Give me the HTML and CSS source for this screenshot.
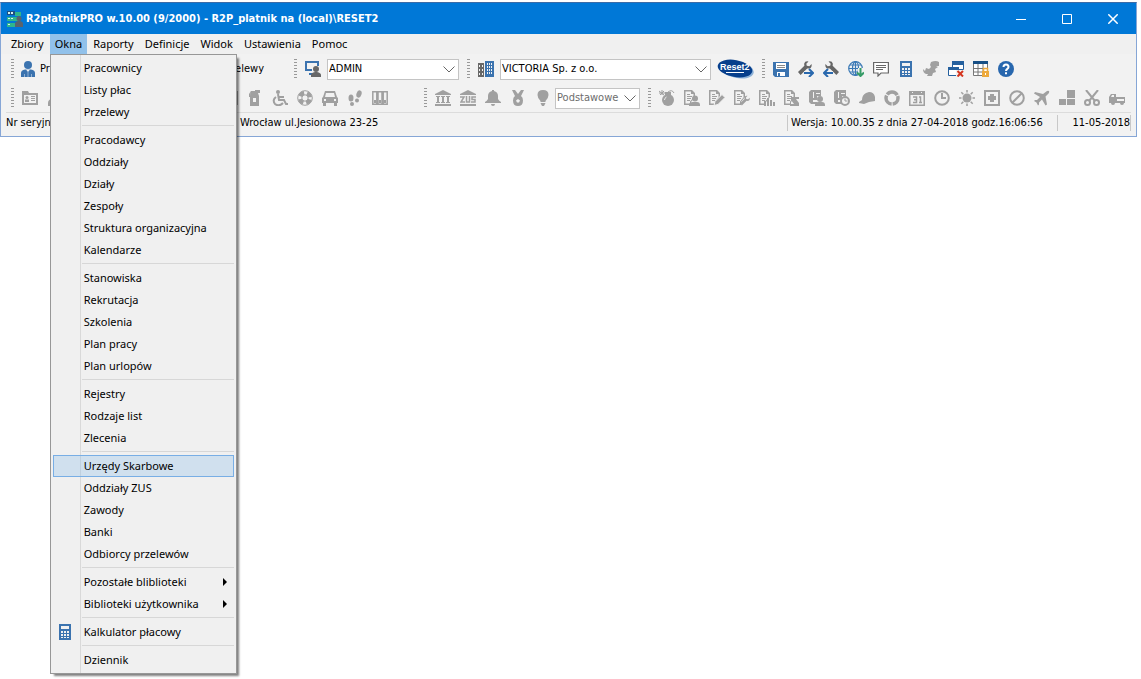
FILE: index.html
```
<!DOCTYPE html>
<html lang="pl">
<head>
<meta charset="utf-8">
<title>R2płatnikPRO</title>
<link rel="stylesheet" href="styles.css">
</head>
<body>
<svg class="defs" aria-hidden="true">
  <symbol id="doc" viewBox="0 0 16 16"><path fill-rule="evenodd" d="M0 0h8l3 3v4L7 12v3H0zM1.500 1.500v12H6v-2l3.500-4V4H7V1.500zM3 4h3v1H3zM3 6h5v1H3zM3 8h4v1H3zM3 10h3v1H3z"/></symbol>
  <symbol id="book" viewBox="0 0 16 16"><path fill-rule="evenodd" d="M2 0h10v6H8v4H4v2h4v2H2L0 12V2zM4 2v6h1V2zM7 3v1h4V3z"/></symbol>
  <symbol id="person" viewBox="0 0 16 16"><circle cx="8" cy="4" r="4"/><path d="M1 16v-3q0-4 5-4.500h4q5 .500 5 4.500v3z"/></symbol>
  <symbol id="wrench" viewBox="0 0 16 16"><path d="M15.500 3.500L13 6l-3-.500L9.500 3 12 .500Q8-.500 7 3l.300 2.500L0 12.500 3 16l7.500-7.500Q13 9 14.500 8q1.500-1.500 1-4.500z"/></symbol>
  <symbol id="calc" viewBox="0 0 16 16"><path fill-rule="evenodd" d="M2 0h12v16H2zM4 2v3h8V2zM4 7v2h2V7zM7 7v2h2V7zM10 7v2h2V7zM4 10v2h2v-2zM7 10v2h2v-2zM10 10v2h2v-2zM4 13v1h2v-1zM7 13v1h2v-1zM10 13v1h2v-1z"/></symbol>
</svg>
<main class="window">
  <header class="titlebar">
    <svg class="icon" viewBox="0 0 16 16"><path fill="#1c4f83" d="M0 0h8v4H0z"/><path fill="#2fb58c" d="M8 1h6v4H8zM0 6h12v4H0zM0 12h8v4H0z"/><path fill="#d5f2ed" d="M1 1h2v2H1zM4 1h2v2H4zM1 7h2v1H1zM4 7h2v1H4zM1 13h2v1H1z"/><circle cx="12" cy="7.500" r="2.500" fill="#59636d"/><path fill="#59636d" d="M8 16v-3q0-3 4-3t4 3v3z"/></svg>
    <h1 class="title">R2płatnikPRO w.10.00 (9/2000) - R2P_platnik na (local)\RESET2</h1>
    <button class="win-btn" aria-label="Minimalizuj"><svg class="glyph" viewBox="0 0 10 10"><path d="M0 5.500h10"/></svg></button>
    <button class="win-btn" aria-label="Maksymalizuj"><svg class="glyph" viewBox="0 0 10 10"><path d="M.5 .5h9v9h-9z"/></svg></button>
    <button class="win-btn" aria-label="Zamknij"><svg class="glyph" viewBox="0 0 10 10"><path stroke-width="1.500" d="M.3 .3l9.400 9.400M9.700 .3L.3 9.700"/></svg></button>
  </header>

  <nav class="menubar">
    <button class="menu-btn">Zbiory</button>
    <div class="menu-holder">
      <button class="menu-btn open">Okna</button>
      <div class="dropdown" role="menu">
        <button class="item">Pracownicy</button>
        <button class="item">Listy płac</button>
        <button class="item">Przelewy</button>
        <hr class="rule">
        <button class="item">Pracodawcy</button>
        <button class="item">Oddziały</button>
        <button class="item">Działy</button>
        <button class="item">Zespoły</button>
        <button class="item">Struktura organizacyjna</button>
        <button class="item">Kalendarze</button>
        <hr class="rule">
        <button class="item">Stanowiska</button>
        <button class="item">Rekrutacja</button>
        <button class="item">Szkolenia</button>
        <button class="item">Plan pracy</button>
        <button class="item">Plan urlopów</button>
        <hr class="rule">
        <button class="item">Rejestry</button>
        <button class="item">Rodzaje list</button>
        <button class="item">Zlecenia</button>
        <hr class="rule">
        <button class="item active">Urzędy Skarbowe</button>
        <button class="item">Oddziały ZUS</button>
        <button class="item">Zawody</button>
        <button class="item">Banki</button>
        <button class="item">Odbiorcy przelewów</button>
        <hr class="rule">
        <button class="item">Pozostałe bliblioteki<svg class="arrow" viewBox="0 0 4 8"><path d="M0 0l4 4-4 4z"/></svg></button>
        <button class="item">Biblioteki użytkownika<svg class="arrow" viewBox="0 0 4 8"><path d="M0 0l4 4-4 4z"/></svg></button>
        <hr class="rule">
        <button class="item with-icon"><svg class="icon blue"><use href="#calc"/></svg>Kalkulator płacowy</button>
        <hr class="rule">
        <button class="item">Dziennik</button>
      </div>
    </div>
    <button class="menu-btn">Raporty</button>
    <button class="menu-btn">Definicje</button>
    <button class="menu-btn">Widok</button>
    <button class="menu-btn">Ustawienia</button>
    <button class="menu-btn">Pomoc</button>
  </nav>

  <div class="toolbar upper">
    <div class="group">
      <i class="grip"></i>
      <button class="tool labelled"><svg class="icon" viewBox="0 0 16 16"><circle cx="8" cy="4" r="4" fill="#3b73af"/><path fill="#3b73af" d="M1 16v-4q0-3 4-3.500h6q4 .500 4 3.500v4z"/><path fill="#f2f2f2" d="M6 8.500h4L8 11z"/><path stroke="#8fb0d3" d="M4.500 13v3M11.500 13v3M8 10v6"/></svg>Pracownicy</button>
      <button class="tool labelled last">Przelewy</button>
    </div>
    <div class="group">
      <i class="grip"></i>
      <label class="tool" for="user"><svg class="icon" viewBox="0 0 16 16"><path fill="none" stroke="#3b73af" stroke-width="2" d="M13 5V1H1v8h6M4 13h4"/><g fill="#686868"><circle cx="11" cy="8" r="3"/><path d="M6 16v-2q0-2 4-3h2q4 1 4 3v2z"/></g></svg></label>
      <span class="combo"><select id="user" class="field"><option>ADMIN</option></select><svg class="chevron" viewBox="0 0 12 7"><path d="M.5 .5L6 6 11.500 .5"/></svg></span>
    </div>
    <div class="group">
      <i class="grip"></i>
      <label class="tool" for="firm"><svg class="icon" viewBox="0 0 16 16"><path fill="#686868" d="M0 2h6v14H0z"/><path fill="#3b73af" d="M7 0h9v16H7z"/><path fill="#f2f2f2" d="M1 4h1v2H1zM4 4h1v2H4zM1 8h1v2H1zM4 8h1v2H4zM1 12h1v2H1zM4 12h1v2H4zM9 2h1v2H9zM11 2h1v2h-1zM13 2h1v2h-1zM9 5h1v2H9zM11 5h1v2h-1zM13 5h1v2h-1zM9 8h1v2H9zM11 8h1v2h-1zM13 8h1v2h-1zM9 11h1v2H9zM11 11h1v2h-1zM13 11h1v2h-1z"/></svg></label>
      <span class="combo"><select id="firm" class="field"><option>VICTORIA Sp. z o.o.</option></select><svg class="chevron" viewBox="0 0 12 7"><path d="M.5 .5L6 6 11.500 .5"/></svg></span>
      <svg class="logo" viewBox="0 0 38 22"><ellipse cx="20" cy="11.500" rx="17" ry="8.500" transform="rotate(12 20 11.500)" fill="#8eb2d8"/><ellipse cx="18" cy="10.500" rx="17.500" ry="8.500" transform="rotate(10 18 10.500)" fill="#073f8c"/><text x="3" y="12">Reset2</text><path stroke="#fff" stroke-width="1" d="M9 14.500h18"/></svg>
    </div>
    <div class="group">
      <i class="grip"></i>
      <button class="tool" aria-label="Zapisz"><svg class="icon" viewBox="0 0 16 16"><path fill="#3b73af" d="M0 1h16v15H2l-2-2z"/><path fill="#fff" d="M3 2h10v6H3zM4 11h8v4H4z"/><path stroke="#888" d="M4 4.500h8M4 6.500h8"/><path fill="#3b73af" d="M5 12h2v3H5z"/></svg></button>
      <button class="tool" aria-label="Eksport"><svg class="icon" viewBox="0 0 16 16"><use href="#wrench" width="14" height="14" fill="#666"/><path fill="none" stroke="#f2f2f2" stroke-width="4" d="M6 12h9"/><path fill="none" stroke="#2a69ae" stroke-width="2" d="M6 12h9M11 8l4 4-4 4"/></svg></button>
      <button class="tool" aria-label="Import"><svg class="icon" viewBox="0 0 16 16"><g transform="matrix(-1 0 0 1 16 0)"><use href="#wrench" width="14" height="14" fill="#666"/></g><path stroke="#f2f2f2" stroke-width="4" d="M1 12h9"/><path fill="none" stroke="#2a69ae" stroke-width="2" d="M10 12H1M5 8l-4 4 4 4"/></svg></button>
      <button class="tool" aria-label="Aktualizacja"><svg class="icon" viewBox="0 0 16 16"><g fill="none" stroke="#3978b5" stroke-width="1.200"><circle cx="7.500" cy="7.500" r="6.800"/><ellipse cx="7.500" cy="7.500" rx="3" ry="6.800"/><path d="M7.500 1v13M1 7.500h13M2 4h11M2 11h11"/></g><path stroke="#f2f2f2" stroke-width="5" d="M12.500 7v9"/><path fill="none" stroke="#379c68" stroke-width="2" d="M12.500 7v8M9 11.500l3.500 3.500 3.500-3.500"/></svg></button>
      <button class="tool" aria-label="Wiadomości"><svg class="icon" viewBox="0 0 16 16"><path fill="#fff" stroke="#686868" stroke-width="1.200" d="M.6 1.500h14.800v10.500H8l-3 3v-3H.6z"/><path stroke="#686868" d="M3 4.500h10M3 6.500h10M3 8.500h7"/></svg></button>
      <button class="tool blue" aria-label="Kalkulator"><svg class="icon"><use href="#calc"/></svg></button>
      <button class="tool" aria-label="Kadry"><svg class="icon" viewBox="0 0 16 16"><path d="M8 1q5-2 8 0v4h-3l2 1-3 2 1 3-3 1-1 3H4l1-2H3q-3-1-3-5l2 2 1-3 3 1 2-2-1-2z"/></svg></button>
      <button class="tool" aria-label="Zamknij okna"><svg class="icon" viewBox="0 0 16 16"><path fill="#fff" stroke="#25609e" d="M4.500 1.500h11v7h-11z"/><path fill="#25609e" d="M4 0h12v4H4z"/><path fill="#fff" stroke="#25609e" d="M.5 7.500h10v7H.5z"/><path fill="#25609e" d="M0 6h11v3H0z"/><path fill="#f2f2f2" d="M8 9h8v7H8z"/><path stroke="#d4351f" stroke-width="2" d="M9.500 10l5.500 5.500M15 10l-5.500 5.500"/></svg></button>
      <button class="tool" aria-label="Blokada"><svg class="icon" viewBox="0 0 16 16"><path fill="#fff" stroke="#777" d="M.5 3v11.500h14V3M.5 7.500h14M.5 11h14M5 3v11M10 3v11"/><path fill="#174f85" d="M0 0h15v3H0z"/><path fill="#eda93b" d="M9 10h7v6H9z"/><path fill="none" stroke="#eda93b" stroke-width="1.500" d="M10.500 10V7.500h4V10"/><path fill="#fff" d="M12 12h1v2h-1z"/></svg></button>
      <button class="tool" aria-label="Pomoc"><svg class="icon" viewBox="0 0 16 16"><circle cx="8" cy="8" r="8" fill="#2867ae"/><path fill="none" stroke="#fff" stroke-width="2" d="M5.500 6q0-2.500 2.500-2.500T10.500 6q0 1-1.200 1.800T8 10M8 11.200v2"/></svg></button>
    </div>
  </div>

  <div class="toolbar lower">
    <div class="group">
      <i class="grip"></i>
      <button class="tool" aria-label="Kartoteka"><svg class="icon" viewBox="0 0 16 16"><path fill-rule="evenodd" d="M0 1h6l1 2h9v12H0zM2 5v8h12V5z"/><circle cx="5" cy="7.500" r="1.500"/><path d="M3 12V9.500h4V12zM9 6h4v1H9zM9 8h4v1H9zM9 10h4v1H9z"/></svg></button>
      <button class="tool" aria-label="Rodzina"><svg class="icon"><use href="#person"/></svg></button>
      <span class="tool"></span><span class="tool"></span><span class="tool"></span><span class="tool"></span><span class="tool"></span><span class="tool"></span>
      <button class="tool" aria-label="Biblioteka"><svg class="icon" viewBox="0 0 16 16"><path d="M0 1h16v14H0z"/></svg></button>
      <button class="tool" aria-label="Gaśnica"><svg class="icon" viewBox="0 0 16 16"><path fill-rule="evenodd" d="M4 1h4V0h5v3h-2l1 3v10H3V6Q3 3 4 1zM6 8v4h3V8z"/><path d="M4 1L2 4v3h1z"/></svg></button>
      <button class="tool" aria-label="Niepełnosprawność"><svg class="icon" viewBox="0 0 16 16"><circle cx="6" cy="2" r="2"/><path fill="none" stroke="currentColor" stroke-width="2" d="M6 4l1 6h5l2 4h2M7 7h5M4 7q-4 3-1 7 4 3 8-1"/></svg></button>
      <button class="tool" aria-label="Ubezpieczenia"><svg class="icon" viewBox="0 0 16 16"><circle cx="8" cy="8" r="7.300" fill="none" stroke="currentColor"/><circle cx="8" cy="8" r="5" fill="none" stroke="currentColor" stroke-width="4" stroke-dasharray="4.850 3" stroke-dashoffset="-1.500"/><circle cx="8" cy="8" r="3.200" fill="none" stroke="currentColor"/></svg></button>
      <button class="tool" aria-label="Samochody"><svg class="icon" viewBox="0 0 16 16"><path fill-rule="evenodd" d="M3 1h10l2 6 1 1v5h-1v3h-3v-3H4v3H1v-3H0V8l1-1zM4 3L3 7h10l-1-4zM2 9v2h2V9zM12 9v2h2V9z"/></svg></button>
      <button class="tool" aria-label="Obuwie"><svg class="icon" viewBox="0 0 16 16"><ellipse cx="4" cy="8" rx="2.500" ry="3.500"/><ellipse cx="5" cy="14" rx="2" ry="2"/><ellipse cx="12" cy="4" rx="2.500" ry="3.800" transform="rotate(18 12 4)"/><ellipse cx="10" cy="10.500" rx="2" ry="2"/></svg></button>
      <button class="tool" aria-label="Segregatory"><svg class="icon" viewBox="0 0 16 16"><path fill="none" stroke="currentColor" stroke-width="1.500" d="M.8 1.800h4v12.500h-4zM6 1.800h4v12.500H6zM11.200 1.800h4v12.500h-4z"/><path d="M2 10h2v3H2zM7 10h2v3H7zM12 10h2v3h-2z"/></svg></button>
    </div>
    <div class="group">
      <i class="grip"></i>
      <button class="tool" aria-label="Urząd"><svg class="icon" viewBox="0 0 16 16"><path d="M8 0l8 4v1H0V4zM1 6h4v1H4v5h1v1H1v-1h1V7H1zM6 6h4v1H9v5h1v1H6v-1h1V7H6zM11 6h4v1h-1v5h1v1h-4v-1h1V7h-1zM0 14h16v2H0z"/></svg></button>
      <button class="tool" aria-label="ZUS"><svg class="icon" viewBox="0 0 16 16"><path d="M8 0l8 4v1H0V4zM0 14h16v2H0z"/><path fill="none" stroke="currentColor" stroke-width="1.500" d="M0 7h4l-3 5h4M6.500 6v6h3V6M16 7h-4v2.500h3V12h-4"/></svg></button>
      <button class="tool" aria-label="Przypomnienia"><svg class="icon" viewBox="0 0 16 16"><path d="M7 0h2v1q4 1 4 5v3q1 2 3 3v1H0v-1q2-1 3-3V6q0-4 4-5zM6 14h4q0 2-2 2t-2-2z"/></svg></button>
      <button class="tool" aria-label="Nagrody"><svg class="icon" viewBox="0 0 16 16"><path fill-rule="evenodd" d="M2 0h3l3 4 3-4h3l-3 6q2 1 2 4.500Q13 16 8 16t-5-5.500Q3 7 5 6zM8 9L6 10.500l1 2h2l1-2z"/></svg></button>
      <button class="tool" aria-label="Pomysły"><svg class="icon" viewBox="0 0 16 16"><path d="M8 0q5.500 0 5.500 5 0 3-3 6v1h-5v-1q-3-3-3-6 0-5 5.500-5zM5.500 13h5L9 16H7z"/></svg></button>
      <span class="combo muted"><select class="field" aria-label="Widok" disabled><option>Podstawowe</option></select><svg class="chevron" viewBox="0 0 12 7"><path d="M.5 .5L6 6 11.500 .5"/></svg></span>
    </div>
    <div class="group">
      <i class="grip"></i>
      <button class="tool" aria-label="Zagrożenia"><svg class="icon" viewBox="0 0 16 16"><circle cx="9" cy="10" r="6"/><path d="M6 2h6v4H6z"/><path fill="none" stroke="currentColor" d="M9 2Q13-1 15 3M0 1l5 4M5 1L1 5M0 3h6M3 0v5"/><path fill="none" stroke="#eee" d="M5.500 10q0-2 2-3"/></svg></button>
      <button class="tool" aria-label="Dokument osobowy"><svg class="icon" viewBox="0 0 16 16"><use href="#doc" width="16" height="16"/><circle cx="11" cy="8.500" r="3"/><path d="M5 16v-1q0-3 4-3h4q3 0 3 3v1z"/></svg></button>
      <button class="tool" aria-label="Edycja dokumentu"><svg class="icon" viewBox="0 0 16 16"><use href="#doc" width="16" height="16"/><path stroke="#f2f2f2" d="M5 15.500l1-4 7-7 3 3-7 7z"/></svg></button>
      <button class="tool" aria-label="Narzędzia"><svg class="icon" viewBox="0 0 16 16"><use href="#doc" width="16" height="16"/><use href="#wrench" x="6" y="5" width="10" height="11"/></svg></button>
      <button class="tool" aria-label="Wykresy"><svg class="icon" viewBox="0 0 16 16"><use href="#doc" width="16" height="16"/><path d="M5 11h2v5H5zM8 8h2v8H8zM11 10h2v6h-2zM14 12h2v4h-2z"/></svg></button>
      <button class="tool" aria-label="Umowy"><svg class="icon" viewBox="0 0 16 16"><use href="#doc" width="16" height="16"/><path d="M7 7h8v2h-3l3 4v3H6v-2h4L7 10z"/></svg></button>
      <button class="tool" aria-label="Akta"><svg class="icon" viewBox="0 0 16 16"><use href="#book" width="16" height="16"/><circle cx="11" cy="9" r="3"/><path d="M6 16v-1q0-3 3-3h4q3 0 3 3v1z"/></svg></button>
      <button class="tool" aria-label="Historia"><svg class="icon" viewBox="0 0 16 16"><use href="#book" width="16" height="16"/><circle cx="11" cy="11" r="4" fill="#f2f2f2" stroke="currentColor" stroke-width="2"/><path fill="none" stroke="currentColor" d="M11 8.500V11h2.500"/></svg></button>
      <button class="tool" aria-label="BHP"><svg class="icon" viewBox="0 0 16 16"><path d="M3 10q0-5 4-7l3-1q5 0 6 5v4l-6 1-5 2-5-1v-1z"/></svg></button>
      <button class="tool" aria-label="Cykl"><svg class="icon" viewBox="0 0 16 16"><circle cx="8" cy="8" r="6" fill="none" stroke="currentColor" stroke-width="3.500" stroke-dasharray="11.500 1.060" stroke-dashoffset="3"/></svg></button>
      <button class="tool" aria-label="Kalendarz"><svg class="icon" viewBox="0 0 16 16"><path fill-rule="evenodd" d="M0 1h16v15H0zM1.500 5v9.500h13V5zM3 2v1h1V2zM12 2v1h1V2z"/><path fill="none" stroke="currentColor" stroke-width="1.500" d="M4 7h3.500v5.500H4M5 9.700h2.500M10 7h1.500v6M10 12.500h3"/></svg></button>
      <button class="tool" aria-label="Czas pracy"><svg class="icon" viewBox="0 0 16 16"><circle cx="8" cy="8" r="6.800" fill="none" stroke="currentColor" stroke-width="2"/><path fill="none" stroke="currentColor" stroke-width="2" d="M8 3v5h4"/></svg></button>
      <button class="tool" aria-label="Urlopy"><svg class="icon" viewBox="0 0 16 16"><circle cx="8" cy="8" r="4.500"/><path stroke="currentColor" stroke-width="1.500" d="M8 0v2.500M8 13.500V16M0 8h2.500M13.500 8H16M2.300 2.300l2 2M11.700 11.700l2 2M13.700 2.300l-2 2M4.300 11.700l-2 2"/></svg></button>
      <button class="tool" aria-label="Zdrowie"><svg class="icon" viewBox="0 0 16 16"><path fill="none" stroke="currentColor" stroke-width="2" d="M1 1h14v14H1z"/><path d="M6 4h4v2h2v4h-2v2H6v-2H4V6h2z"/></svg></button>
      <button class="tool" aria-label="Nieobecność"><svg class="icon" viewBox="0 0 16 16"><circle cx="8" cy="8" r="6.800" fill="none" stroke="currentColor" stroke-width="2"/><path stroke="currentColor" stroke-width="2" d="M3 13L13 3"/></svg></button>
      <button class="tool" aria-label="Delegacje"><svg class="icon" viewBox="0 0 16 16"><path d="M13 1q3-1 2 2l-3.500 3.500 1.500 8-1.500 1-3.500-6-3 3v2l-1 1-1.500-3L0 11l1-1h2l3-3L0 3.500 1 2l8 2z"/></svg></button>
      <button class="tool" aria-label="Magazyn"><svg class="icon" viewBox="0 0 16 16"><path d="M8 0h8v8H8zM0 9h7v6H0zM8 9h8v6H8z"/></svg></button>
      <button class="tool" aria-label="Potrącenia"><svg class="icon" viewBox="0 0 16 16"><g fill="none" stroke="currentColor" stroke-width="2"><path d="M2 0l9 11M14 0L5 11"/><circle cx="3.500" cy="12.500" r="2.500"/><circle cx="12.500" cy="12.500" r="2.500"/></g></svg></button>
      <button class="tool" aria-label="Transport"><svg class="icon" viewBox="0 0 16 16"><path fill-rule="evenodd" d="M0 7l2-3h5v3h9v6h-1a2 2 0 0 1-4 0H6a2 2 0 0 1-4 0H0zM2 7h3V5H3zM8 9v2h7V9z"/></svg></button>
    </div>
  </div>

  <footer class="status">
    <span class="cell serial">Nr seryjny</span>
    <span class="cell address">Wrocław ul.Jesionowa 23-25</span>
    <span class="cell version">Wersja: 10.00.35 z dnia 27-04-2018 godz.16:06:56</span>
    <span class="cell date">11-05-2018</span>
  </footer>
</main>
</body>
</html>
```
FILE: styles.css
```
* { box-sizing: border-box; }

body {
  margin: 0;
  min-height: 100vh;
  padding: 2px 4px 0 0;
  background: #fff;
  color: #000;
  font: 11px/16px "DejaVu Sans Condensed", "DejaVu Sans", sans-serif;
}

button, select { font: inherit; color: inherit; border: 0; padding: 0; margin: 0; background: none; }

.defs { display: none; }
.window { background: #f2f2f2; border: 1px solid #86a6d6; border-top-color: #3b6ca8; }
.icon { width: 16px; height: 16px; flex: none; fill: currentColor; }
.blue { color: #3b73af; }

.titlebar { display: flex; align-items: center; height: 31px; padding-left: 6px; background: #0078d7; color: #fff; }
.title { flex: 1; margin: 0 0 0 3px; font-size: 11px; line-height: 16px; font-weight: bold; white-space: nowrap; }
.win-btn { display: flex; align-items: center; justify-content: center; width: 46px; height: 30px; }
.glyph { width: 10px; height: 10px; fill: none; stroke: #fff; }

.menubar { display: flex; gap: 1px; height: 20px; padding-left: 5px; background: #f0f0f0; font: 11px/20px "Noto Sans", "Open Sans", sans-serif; }
.menu-btn { height: 20px; padding: 0 5px; white-space: nowrap; }
.menu-btn.open { background: #91c1ea; }
.menu-holder { position: relative; }

.dropdown {
  position: absolute;
  z-index: 2;
  top: 100%;
  left: 0;
  width: 187px;
  padding: 2px;
  border: 1px solid #979797;
  background: linear-gradient(90deg, #f0f0f0 29px, #d9d9d9 29px, #d9d9d9 30px, #f0f0f0 30px);
  box-shadow: 3px 3px 2px -1px #00000080;
}
.item { display: flex; align-items: center; width: 100%; height: 22px; padding: 0 6px 0 30px; border: 1px solid transparent; line-height: 20px; text-align: left; white-space: nowrap; }
.item.active { background: #91c1ea55; border-color: #78aee5; }
.item.with-icon { padding-left: 3px; gap: 11px; }
.arrow { width: 4px; height: 8px; margin-left: auto; }
.rule { height: 1px; margin: 2px 0 3px 29px; border: 0; background: #d7d7d7; }

.toolbar { display: grid; padding-left: 8px; }
.upper { grid-template-columns: 283px 173px 295px 1fr; height: 30px; }
.lower { grid-template-columns: 413px 224px 1fr; height: 28px; }
.group { display: flex; align-items: center; min-width: 0; padding-left: 2px; }
.grip { flex: none; width: 3px; height: 20px; margin-right: 3px; background: repeating-linear-gradient(#999 0 1px, transparent 1px 3px); }
.tool { display: flex; align-items: center; justify-content: center; flex: none; width: 25px; height: 24px; color: #a0a0a0; }
.tool.blue { color: #3b73af; }
.tool.labelled { width: auto; gap: 4px; padding-left: 3px; color: #000; }
.tool.last { margin-left: auto; padding-right: 28px; }

.combo { display: grid; flex: 1; align-items: center; height: 21px; margin: 0 6px 0 2px; border: 1px solid #c4c4c4; background: #fff; }
.field { grid-area: 1 / 1; width: 100%; height: 19px; padding-left: 1px; appearance: none; opacity: 1; }
.chevron { grid-area: 1 / 1; justify-self: end; width: 12px; height: 7px; margin-right: 3px; fill: none; stroke: #666; pointer-events: none; }
.muted { color: #6d6d6d; margin-left: 0; }
.logo { width: 38px; height: 22px; margin-right: 5px; flex: none; }
.logo text { font: bold 9px "Liberation Sans", sans-serif; fill: #fff; }

.status { display: flex; align-items: center; height: 24px; margin: 0 5px; padding-bottom: 4px; border-top: 1px solid #dcdcdc; white-space: nowrap; }
.serial { width: 234px; }
.address { flex: 1; }
.version { width: 270px; padding-left: 3px; border-left: 1px solid #c8c8c8; }
.date { width: 74px; border-left: 1px solid #c8c8c8; border-right: 1px solid #c8c8c8; text-align: right; }
```
